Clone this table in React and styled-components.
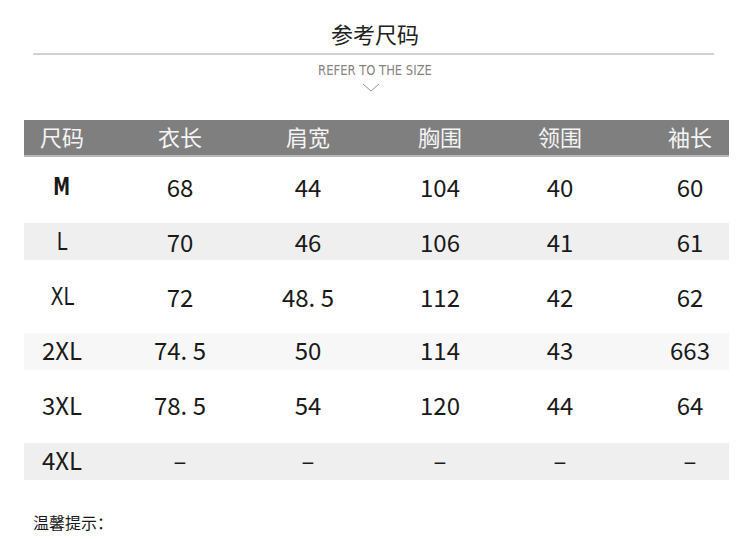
import React from "react";
import styled, { createGlobalStyle } from "styled-components";

const GlobalStyle = createGlobalStyle`
  body {
    margin: 0;
    background: #fff;
    font-family: "Noto Sans CJK SC", "Noto Sans", sans-serif;
    color: #1a1a1a;
  }
`;

const Page = styled.div`
  width: 750px;
  height: 539px;
  overflow: hidden;
  background: #fff;
`;

const Title = styled.h1`
  margin: 18px 0 0;
  text-align: center;
  font-size: 22px;
  line-height: 30px;
  font-weight: 400;
  color: #222;
`;

const Divider = styled.div`
  margin: 5px 36px 0 33px;
  height: 2px;
  background: #d2d2d2;
`;

const Subtitle = styled.div`
  margin-top: 7px;
  text-align: center;
  font-family: "DejaVu Sans", "Noto Sans", sans-serif;
  font-stretch: condensed;
  font-size: 14px;
  line-height: 17px;
  color: #8a8282;
  transform: scaleX(0.92);
`;

const Chevron = styled.svg`
  display: block;
  margin: 4px 0 0 362px;
`;

const Table = styled.div`
  margin: 28px 21px 0 24px;
  display: flex;
  flex-direction: column;
  gap: 18px;
`;

const Row = styled.div`
  display: grid;
  grid-template-columns: 76px 160px 96px 168px 72px 1fr;
  height: 37px;
  align-items: center;
  background: ${(p) => p.$bg || "transparent"};
  color: ${(p) => (p.$head ? "#f4f4f4" : "#1a1a1a")};
  font-size: ${(p) => (p.$head ? "22px" : "24px")};
  border-bottom: ${(p) => (p.$head ? "2px solid #b8b8b8" : "none")};
  box-sizing: border-box;
  margin-bottom: ${(p) => (p.$head ? "-7px" : "0")};
`;

const Cell = styled.div`
  text-align: center;
  line-height: 33px;
  padding-bottom: 4px;
  white-space: nowrap;
  padding-left: ${(p) => (p.$last ? "55px" : "0")};
`;

const Narrow = styled.span`
  display: inline-block;
  font-family: "DejaVu Sans", "Noto Sans", sans-serif;
  font-stretch: condensed;
  font-weight: ${(p) => (p.$bold ? 700 : 400)};
  transform: scaleX(${(p) => (p.$bold ? 0.78 : 0.88)});
`;

const Note = styled.div`
  margin: 32px 0 0 33px;
  font-size: 16px;
  line-height: 20px;
  color: #1a1a1a;
`;

const headers = ["尺码", "衣长", "肩宽", "胸围", "领围", "袖长"];

const rows = [
  { cells: ["M", "68", "44", "104", "40", "60"], narrow: true, bold: true },
  { cells: ["L", "70", "46", "106", "41", "61"], bg: "#efefef", narrow: true },
  { cells: ["XL", "72", "48. 5", "112", "42", "62"], narrow: true },
  { cells: ["2XL", "74. 5", "50", "114", "43", "663"], bg: "#f7f7f7" },
  { cells: ["3XL", "78. 5", "54", "120", "44", "64"] },
  { cells: ["4XL", "–", "–", "–", "–", "–"], bg: "#efefef" },
];

const App = () => {
  return (
    <Page>
      <GlobalStyle />
      <Title>参考尺码</Title>
      <Divider />
      <Subtitle>REFER TO THE SIZE</Subtitle>
      <Chevron width="18" height="9" viewBox="0 0 18 9">
        <polyline points="1,1 9,8 17,1" fill="none" stroke="#9a9494" strokeWidth="1" />
      </Chevron>
      <Table>
        <Row $head $bg="#7f7f7f">
          {headers.map((h, i) => (
            <Cell key={h} $last={i === 5}>
              {h}
            </Cell>
          ))}
        </Row>
        {rows.map((r) => (
          <Row key={r.cells[0]} $bg={r.bg}>
            {r.cells.map((c, i) => (
              <Cell key={i} $last={i === 5}>
                {i === 0 && r.narrow ? <Narrow $bold={r.bold}>{c}</Narrow> : c}
              </Cell>
            ))}
          </Row>
        ))}
      </Table>
      <Note>温馨提示：</Note>
    </Page>
  );
};

export default App;
